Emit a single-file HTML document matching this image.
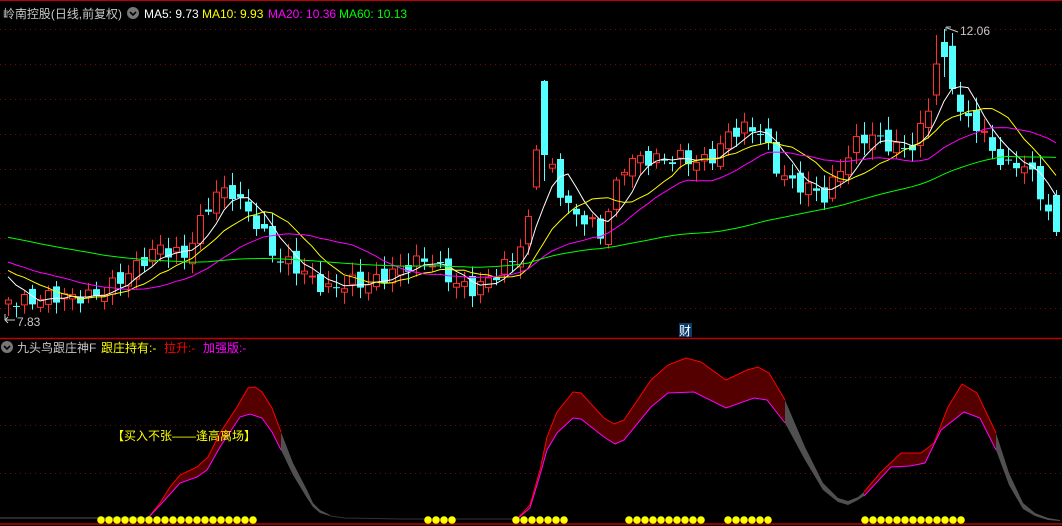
<!DOCTYPE html>
<html><head><meta charset="utf-8"><style>
html,body{margin:0;padding:0;background:#000;width:1062px;height:526px;overflow:hidden}
svg{display:block}
text{font-family:"Liberation Sans","Noto Sans CJK SC",sans-serif}
</style></head><body>
<svg id="s" width="1062" height="526" viewBox="0 0 1062 526" xmlns="http://www.w3.org/2000/svg">
<defs><clipPath id="top"><rect x="0" y="20" width="1062" height="317"/></clipPath></defs>
<g id="grid" stroke="#8a0000" stroke-width="1" stroke-dasharray="1,4">
<line x1="0" y1="29.5" x2="1062" y2="29.5"/><line x1="0" y1="64.5" x2="1062" y2="64.5"/>
<line x1="0" y1="99.5" x2="1062" y2="99.5"/><line x1="0" y1="134.5" x2="1062" y2="134.5"/>
<line x1="0" y1="169.5" x2="1062" y2="169.5"/><line x1="0" y1="204.5" x2="1062" y2="204.5"/>
<line x1="0" y1="238.5" x2="1062" y2="238.5"/><line x1="0" y1="273.5" x2="1062" y2="273.5"/>
<line x1="0" y1="308.5" x2="1062" y2="308.5"/>
<line x1="0" y1="377.5" x2="1062" y2="377.5"/><line x1="0" y1="425.5" x2="1062" y2="425.5"/>
<line x1="0" y1="473.5" x2="1062" y2="473.5"/>
</g>
<line x1="0" y1="338.5" x2="1062" y2="338.5" stroke="#c00000" stroke-width="1.5"/>
<line x1="0" y1="524" x2="1062" y2="524" stroke="#c00000" stroke-width="1.5"/>
<line x1="0" y1="0.5" x2="1062" y2="0.5" stroke="#c00000" stroke-width="1"/>
<g id="candles" clip-path="url(#top)"></g>
<g id="mas" clip-path="url(#top)" fill="none" stroke-width="1"></g>
<g id="ind"></g>
<!-- header -->
<text x="3" y="18" font-size="12" fill="#c8c8c8" textLength="119" lengthAdjust="spacingAndGlyphs">岭南控股(日线,前复权)</text>
<circle cx="133" cy="13" r="6" fill="#777"/><path d="M130 12 L133 15 L136 12" stroke="#000" stroke-width="1.6" fill="none"/>
<text x="144" y="18" font-size="12" fill="#fff">MA5: 9.73</text>
<text x="202" y="18" font-size="12" fill="#ffff00">MA10: 9.93</text>
<text x="268" y="18" font-size="12" fill="#ff00ff">MA20: 10.36</text>
<text x="339" y="18" font-size="12" fill="#00ff00">MA60: 10.13</text>
<text x="960" y="35" font-size="12" fill="#c8c8c8">12.06</text>
<path d="M946 27 L946 31 M946 27 L951 27 M947 28 L958 32" stroke="#c8c8c8" stroke-width="1" fill="none"/>
<text x="17" y="326" font-size="12" fill="#c8c8c8">7.83</text>
<path d="M5 320 L15 320 M5 320 L8 317 M5 320 L8 323 M5 314 L5 320" stroke="#c8c8c8" stroke-width="1" fill="none"/>
<rect x="679" y="323" width="13" height="14" fill="#0a3a6a"/>
<text x="679" y="335" font-size="12" fill="#fff">财</text>
<circle cx="7" cy="347" r="6" fill="#777"/><path d="M4 346 L7 349 L10 346" stroke="#000" stroke-width="1.6" fill="none"/>
<text x="17" y="352" font-size="12" fill="#c8c8c8">九头鸟跟庄神F</text>
<text x="101" y="352" font-size="12" fill="#ffff00">跟庄持有:-</text>
<text x="164" y="352" font-size="12" fill="#ff0000">拉升:-</text>
<text x="203" y="352" font-size="12" fill="#ff00ff">加强版:-</text>
<text x="112" y="440" font-size="12" fill="#ffff00">【买入不张——逢高离场】</text>
</svg>
<script>
var NS="http://www.w3.org/2000/svg";
function el(p,t,a){var e=document.createElementNS(NS,t);for(var k in a)e.setAttribute(k,a[k]);p.appendChild(e);return e;}
var A=[[8,300],[40,297],[70,300],[100,290],[130,275],[160,245],[185,255],[200,225],[215,195],[232,190],[245,205],[262,232],[275,262],[300,268],[330,290],[350,285],[365,285],[390,270],[430,262],[455,280],[475,290],[495,278],[515,255],[530,215],[540,175],[548,155],[556,185],[570,215],[590,220],[600,232],[612,195],[625,165],[650,160],[680,155],[700,165],[715,158],[730,130],[745,125],[760,130],[775,170],[790,185],[810,185],[825,195],[840,170],[860,140],[875,135],[895,145],[910,150],[925,125],[936,70],[946,50],[958,110],[975,122],[990,150],[1005,170],[1020,160],[1035,175],[1053,230]];
function interp(x){for(var j=0;j<A.length-1;j++){if(x<=A[j+1][0]){var t=(x-A[j][0])/(A[j+1][0]-A[j][0]);return A[j][1]+t*(A[j+1][1]-A[j][1]);}}return A[A.length-1][1];}
var N=132,C=[],O=[],H=[],L=[];
for(var i=0;i<N;i++){var x=8+8*i;var c=interp(x)+Math.sin(i*2.3)*7+Math.sin(i*0.7)*3;C.push(c);}
for(var i=0;i<N;i++){var o=(i?C[i-1]:C[0]+4)+Math.sin(i*1.7)*6;O.push(o);var hi=Math.min(o,C[i])-3-Math.abs(Math.sin(i*3.1))*10;var lo=Math.max(o,C[i])+3+Math.abs(Math.cos(i*2.7))*9;H.push(hi);L.push(lo);}
function ov(i,o,c,h,l){O[i]=o;C[i]=c;H[i]=h;L[i]=l;}
ov(66,187,150,145,190);ov(67,81,155,80,181);ov(116,95,64,35,105);ov(117,42,57,29,77);ov(131,195,232,190,236);
var g=document.getElementById("candles");
for(var i=0;i<N;i++){var x=8+8*i;var up=C[i]<O[i];var col=up?"#ff3030":"#54ffff";
el(g,"line",{x1:x+0.5,y1:H[i],x2:x+0.5,y2:L[i],stroke:col,"stroke-width":1});
var t=Math.min(O[i],C[i]),b=Math.max(O[i],C[i]);if(b-t<1)b=t+1;
if(up)el(g,"rect",{x:x-2.5,y:t,width:6,height:b-t,fill:"#000",stroke:col,"stroke-width":1});
else el(g,"rect",{x:x-3,y:t,width:7,height:b-t,fill:col});}
var P=[];for(var k=0;k<60;k++)P.push(200+k*1.2+Math.sin(k)*5);var all=P.concat(C);
var m=document.getElementById("mas");
[[5,"#ffffff"],[10,"#ffff00"],[20,"#ff00ff"],[60,"#00ff00"]].forEach(function(q){var n=q[0],pts=[];
for(var i=0;i<N;i++){var s=0;for(var k=0;k<n;k++)s+=all[60+i-k];pts.push((8+8*i)+","+(s/n).toFixed(1));}
el(m,"polyline",{points:pts.join(" "),stroke:q[1]});});
var ind=document.getElementById("ind");
function poly(a){return a.map(function(p){return p[0]+","+p[1]}).join(" ");}
function band(top,bot,fill){el(ind,"polygon",{points:poly(top.concat(bot.slice().reverse())),fill:fill});}
var r1=[[148,518],[160,503],[170,487],[180,475],[197,467],[208,457],[220,433],[237,407],[248,388],[255,387],[262,392],[272,408],[281,432]];
var m1=[[148,518],[163,502],[180,483],[197,477],[207,470],[220,447],[240,417],[250,414],[262,418],[272,432],[281,450]];
var g1t=[[281,432],[293,463],[307,490],[313,503],[320,510],[330,515]];
var g1b=[[281,450],[293,475],[307,498],[313,507],[320,513],[330,516]];
band(r1,m1,"#550000");band(g1t,g1b,"#505050");
el(ind,"polyline",{points:poly(r1),stroke:"#ff0000",fill:"none"});el(ind,"polyline",{points:poly(m1),stroke:"#ff00ff",fill:"none"});
el(ind,"polyline",{points:"0,518 148,518",stroke:"#555",fill:"none"});
el(ind,"polyline",{points:"330,516 345,518 400,519 515,519",stroke:"#333",fill:"none"});
var r2=[[516,520],[530,505],[540,470],[547,437],[557,412],[573,392],[581,393],[604,418],[614,424],[624,420],[651,380],[668,365],[686,358],[701,362],[726,380],[747,370],[758,367],[769,373],[785,400]];
var m2=[[516,520],[530,508],[540,475],[547,450],[557,433],[573,418],[581,419],[604,437],[615,444],[624,440],[651,407],[668,393],[694,392],[726,408],[754,398],[767,400],[785,423]];
band(r2,m2,"#550000");
var g2t=[[785,400],[805,447],[823,483],[838,498],[848,501],[858,497],[864,492]];
var g2b=[[785,423],[805,460],[823,490],[838,502],[848,505],[858,500],[864,496]];
band(g2t,g2b,"#505050");
el(ind,"polyline",{points:poly(r2),stroke:"#ff0000",fill:"none"});el(ind,"polyline",{points:poly(m2),stroke:"#ff00ff",fill:"none"});
var r3=[[864,492],[880,473],[901,453],[921,453],[934,443],[948,407],[962,384],[977,393],[996,433]];
var m3=[[864,496],[891,467],[910,466],[925,463],[941,430],[964,412],[980,418],[996,450]];
band(r3,m3,"#550000");
var g3t=[[996,433],[1009,473],[1023,503],[1035,513],[1048,518],[1060,520]];
var g3b=[[996,450],[1009,485],[1023,509],[1035,516],[1048,520],[1060,521]];
band(g3t,g3b,"#505050");
el(ind,"polyline",{points:poly(r3),stroke:"#ff0000",fill:"none"});el(ind,"polyline",{points:poly(m3),stroke:"#ff00ff",fill:"none"});
function dots(x0,n){for(var k=0;k<n;k++)el(ind,"circle",{cx:x0+8*k,cy:520,r:3.8,fill:"#ffff00"});}
dots(101,20);dots(428,4);dots(516,7);dots(629,10);dots(728,6);dots(865,13);
</script>
</body></html>
